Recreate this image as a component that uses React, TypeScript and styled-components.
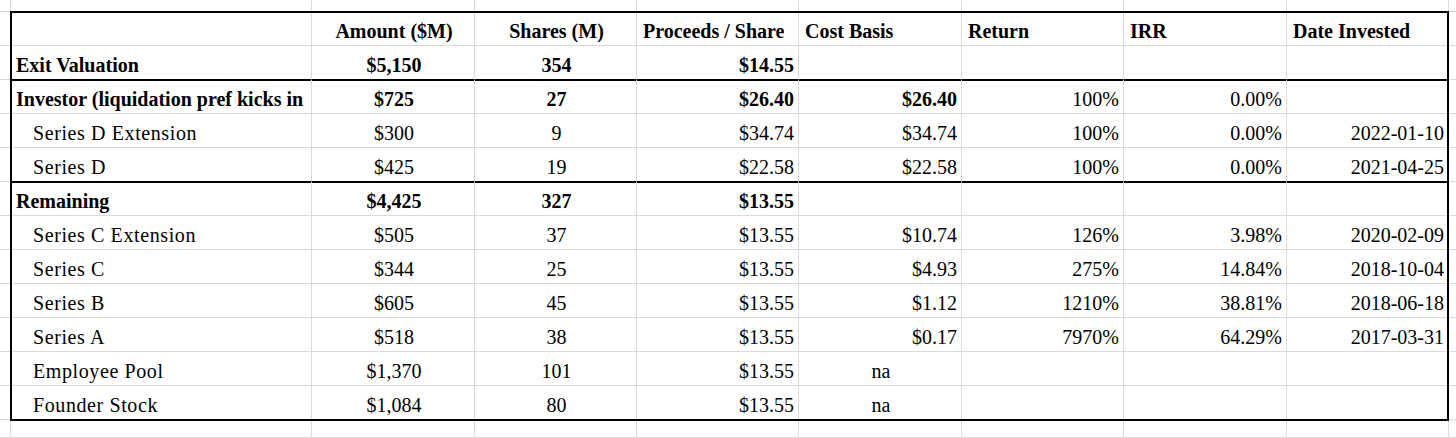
import React from 'react';
import styled, { createGlobalStyle } from 'styled-components';

const GRID = '#dadada';

const Global = createGlobalStyle`
  html, body { margin: 0; padding: 0; background: #fff; }
  body { font-family: "Liberation Serif", "Times New Roman", serif; color: #000; }
`;

const Sheet = styled.div`
  display: grid;
  grid-template-columns: 10px 302px 163px 162px 162px 163px 162px 163px 162px 1fr;
  grid-template-rows: 12px repeat(12, 34px) 1fr;
  width: 1456px;
  height: 438px;
  overflow: hidden;
  background: #fff;
`;

type Align = 'left' | 'center' | 'right';

const Cell = styled.div<{ $r: number; $c: number; $align?: Align; $bold?: boolean; $indent?: boolean; $sep?: boolean }>`
  grid-row: ${(p) => p.$r};
  grid-column: ${(p) => p.$c};
  box-sizing: border-box;
  min-width: 0;
  border-right: 1px solid ${GRID};
  border-bottom: 1px solid ${(p) => (p.$sep ? '#000' : GRID)};
  box-shadow: ${(p) => (p.$sep ? '0 1px 0 #000' : 'none')};
  display: flex;
  align-items: flex-end;
  justify-content: ${(p) => (p.$align === 'center' ? 'center' : p.$align === 'right' ? 'flex-end' : 'flex-start')};
  padding: 0 4px 2px ${(p) => (p.$indent ? '23px' : '6px')};
  font-size: 20px;
  line-height: 23px;
  letter-spacing: ${(p) => (p.$indent ? '0.6px' : '0')};
  font-weight: ${(p) => (p.$bold ? 700 : 400)};
  white-space: nowrap;
  overflow: hidden;
`;

const RangeFrame = styled.div`
  grid-row: 2 / 14;
  grid-column: 2 / 10;
  margin: -1px 0;
  border: 2px solid #000;
  pointer-events: none;
  z-index: 1;
`;

type Row = {
  label: string;
  values: string[];
  bold?: number;
  indent?: boolean;
  sep?: boolean;
  header?: boolean;
};

const rows: Row[] = [
  { label: '', values: ['Amount ($M)', 'Shares (M)', 'Proceeds / Share', 'Cost Basis', 'Return', 'IRR', 'Date Invested'], bold: 8, header: true },
  { label: 'Exit Valuation', values: ['$5,150', '354', '$14.55', '', '', '', ''], bold: 8, sep: true },
  { label: 'Investor (liquidation pref kicks in', values: ['$725', '27', '$26.40', '$26.40', '100%', '0.00%', ''], bold: 5 },
  { label: 'Series D Extension', values: ['$300', '9', '$34.74', '$34.74', '100%', '0.00%', '2022-01-10'], indent: true },
  { label: 'Series D', values: ['$425', '19', '$22.58', '$22.58', '100%', '0.00%', '2021-04-25'], indent: true, sep: true },
  { label: 'Remaining', values: ['$4,425', '327', '$13.55', '', '', '', ''], bold: 8 },
  { label: 'Series C Extension', values: ['$505', '37', '$13.55', '$10.74', '126%', '3.98%', '2020-02-09'], indent: true },
  { label: 'Series C', values: ['$344', '25', '$13.55', '$4.93', '275%', '14.84%', '2018-10-04'], indent: true },
  { label: 'Series B', values: ['$605', '45', '$13.55', '$1.12', '1210%', '38.81%', '2018-06-18'], indent: true },
  { label: 'Series A', values: ['$518', '38', '$13.55', '$0.17', '7970%', '64.29%', '2017-03-31'], indent: true },
  { label: 'Employee Pool', values: ['$1,370', '101', '$13.55', 'na', '', '', ''], indent: true },
  { label: 'Founder Stock', values: ['$1,084', '80', '$13.55', 'na', '', '', ''], indent: true },
];

const headerAlign: Align[] = ['center', 'center', 'left', 'left', 'left', 'left', 'left'];
const dataAlign: Align[] = ['center', 'center', 'right', 'right', 'right', 'right', 'right'];

const COLS = 10;
const ROWS = 14;

export default function App() {
  const cells: React.ReactNode[] = [];

  for (let r = 1; r <= ROWS; r++) {
    const row = r >= 2 && r <= 13 ? rows[r - 2] : undefined;
    for (let c = 1; c <= COLS; c++) {
      const key = `${r}-${c}`;
      if (!row || c === 1 || c === COLS) {
        cells.push(<Cell key={key} $r={r} $c={c} />);
        continue;
      }
      const bold = (row.bold ?? 0) >= c - 1;
      if (c === 2) {
        cells.push(
          <Cell key={key} $r={r} $c={c} $bold={bold} $indent={row.indent} $sep={row.sep}>
            {row.label}
          </Cell>
        );
        continue;
      }
      const v = row.values[c - 3];
      const align: Align = row.header ? headerAlign[c - 3] : v === 'na' ? 'center' : dataAlign[c - 3];
      cells.push(
        <Cell key={key} $r={r} $c={c} $bold={bold} $align={align} $sep={row.sep}>
          {v}
        </Cell>
      );
    }
  }

  return (
    <>
      <Global />
      <Sheet>
        {cells}
        <RangeFrame />
      </Sheet>
    </>
  );
}
